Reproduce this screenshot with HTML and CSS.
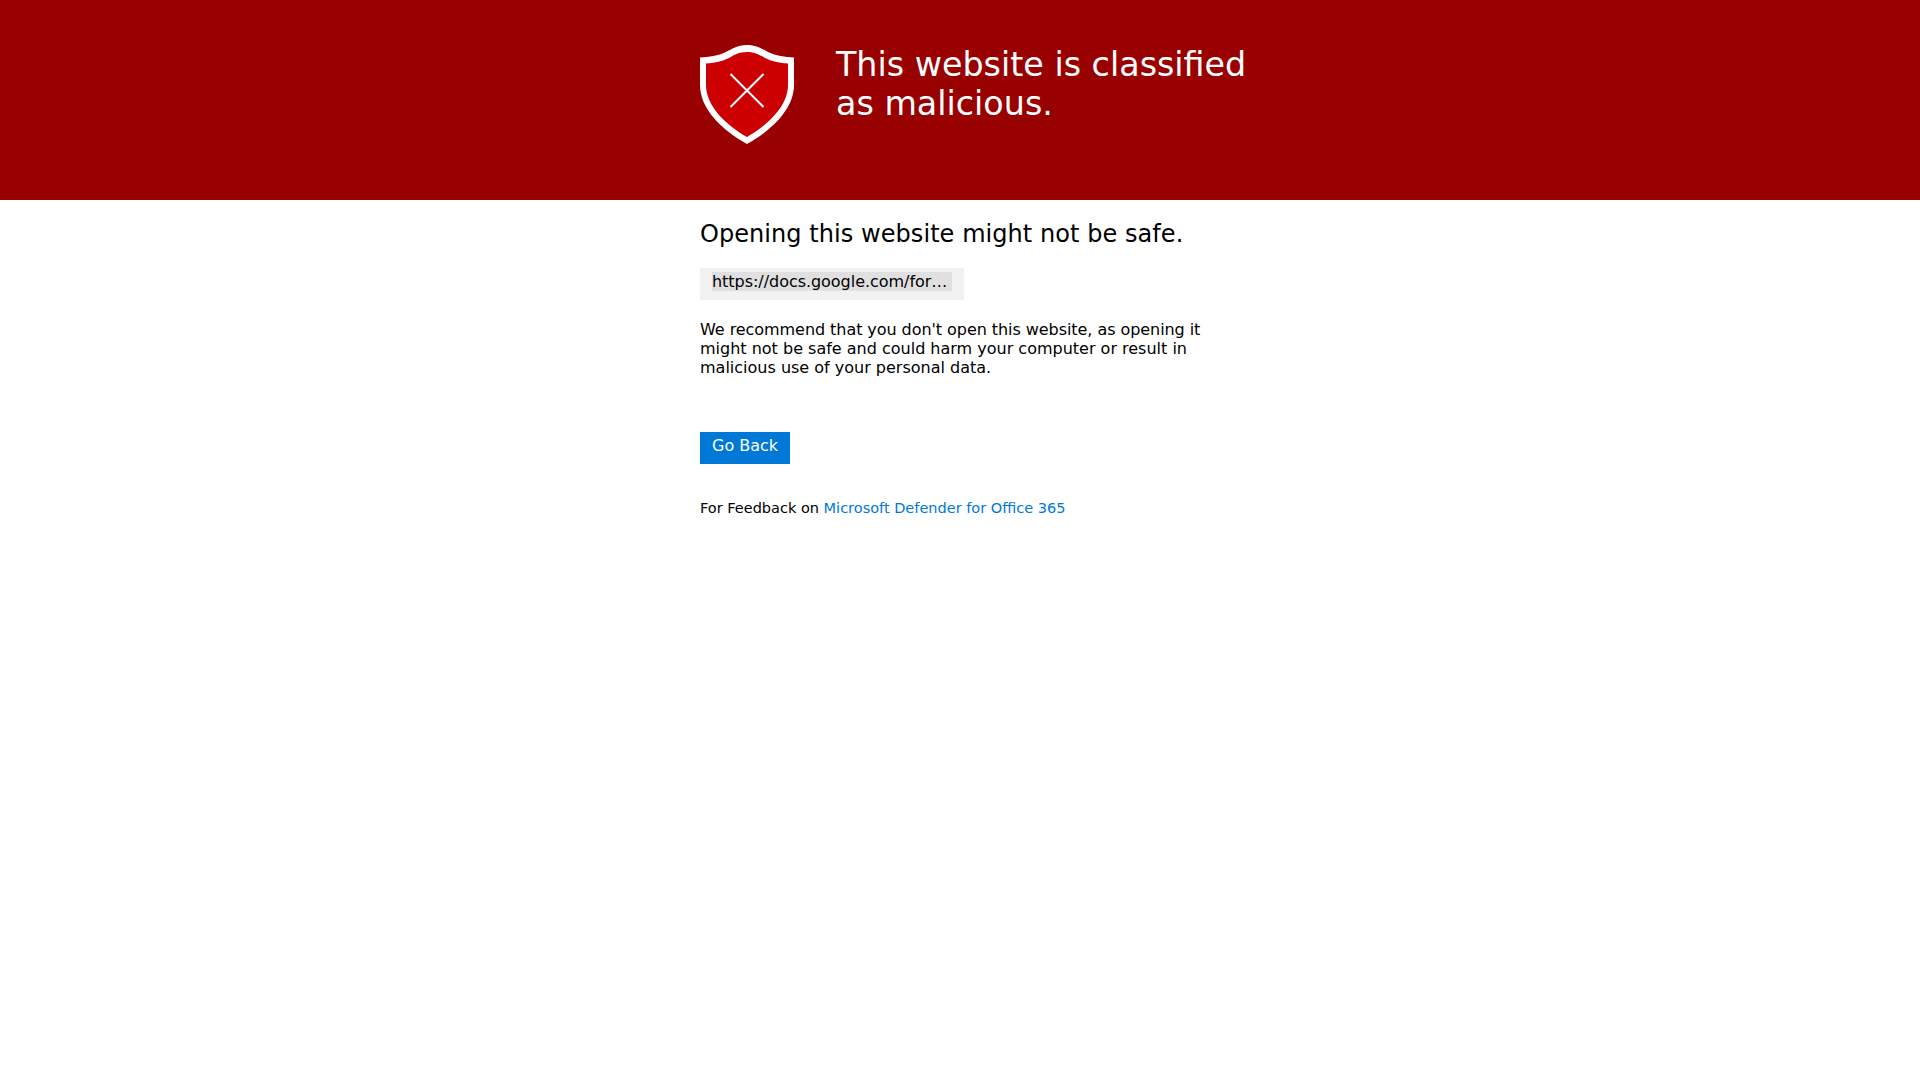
FILE: index.html
```html
<!DOCTYPE html>
<html lang="en">
<head>
<meta charset="utf-8">
<title>This website is classified as malicious.</title>
<link rel="stylesheet" href="styles.css">
</head>
<body>
<header class="banner">
  <div class="column banner-inner">
    <svg class="shield" viewBox="0 0 94 99" aria-hidden="true">
      <path class="shield-outer" d="M47 0C37 0 32 4 26 7C18 11 9 12 0 12.500V40C0 64 22 85 47 99C72 85 94 64 94 40V12.500C85 12 76 11 68 7C62 4 57 0 47 0Z"/>
      <path class="shield-inner" d="M47 7C39 7 34 10 29 13C21 17 14 18 6 18.500V40C6 61 26 80 47 92C68 80 88 61 88 40V18.500C80 18 73 17 65 13C60 10 55 7 47 7Z"/>
      <path class="shield-x" d="M30.500 29L63.500 62M63.500 29L30.500 62"/>
    </svg>
    <h1 class="title">This website is classified as malicious.</h1>
  </div>
</header>
<main class="column content">
  <h2 class="subtitle">Opening this website might not be safe.</h2>
  <div class="url-box"><span class="url-text">https://docs.google.com/for…</span></div>
  <p class="message"><span class="message-lead">We recommend that you don't open this website, as opening it</span> might not be safe and could harm your computer or result in malicious use of your personal data.</p>
  <a class="back-button" href="#">Go Back</a>
  <p class="feedback">For Feedback on <a class="feedback-link" href="#">Microsoft Defender for Office 365</a></p>
</main>
</body>
</html>
```
FILE: styles.css
```css
* {
  box-sizing: border-box;
}

body {
  margin: 0;
  background: #ffffff;
  color: #000000;
  font-family: "DejaVu Sans", sans-serif;
}

.column {
  width: 520px;
  margin: 0 auto;
}

.banner {
  height: 200px;
  background: #990000;
  padding-top: 45px;
}

.banner-inner {
  display: flex;
  align-items: flex-start;
  gap: 42px;
}

.shield {
  flex: none;
  width: 94px;
  height: 99px;
}

.shield-outer {
  fill: #ffffff;
}

.shield-inner {
  fill: #cc0000;
}

.shield-x {
  fill: none;
  stroke: #ffffff;
  stroke-width: 2;
}

.title {
  flex: none;
  margin: 0;
  width: 430px;
  color: #ffffff;
  font-size: 33.330px;
  font-weight: 400;
  line-height: 39px;
}

.content {
  padding-top: 20px;
}

.subtitle {
  margin: 0;
  font-size: 24px;
  font-weight: 400;
  line-height: 29px;
  letter-spacing: 0.060px;
}

.url-box {
  width: 264px;
  height: 32px;
  margin-top: 19px;
  padding: 4px 12px;
  background: #f2f2f2;
  font-size: 16px;
  line-height: 19px;
}

.url-text {
  display: block;
  width: 240px;
  height: 19px;
  background: #e0e0e0;
  white-space: nowrap;
  letter-spacing: -0.040px;
}

.message {
  margin: 20px 0 0;
  font-size: 16px;
  line-height: 19px;
}

.message-lead {
  letter-spacing: -0.060px;
}

.back-button {
  display: block;
  width: 90px;
  height: 32px;
  margin-top: 55px;
  padding: 4px 12px;
  background: #0078d7;
  color: #ffffff;
  font-size: 16px;
  line-height: 19px;
  white-space: nowrap;
  text-decoration: none;
}

.feedback {
  margin: 36px 0 0;
  font-size: 14.500px;
  line-height: 17px;
}

.feedback-link {
  color: #0078d7;
  text-decoration: none;
}
```
